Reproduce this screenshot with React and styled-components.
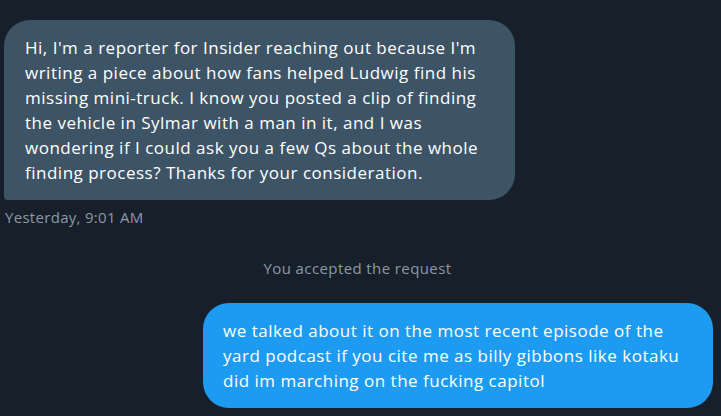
import React from "react";
import styled, { createGlobalStyle } from "styled-components";

const Global = createGlobalStyle`
  html, body { margin: 0; padding: 0; background: #17202a; }
  body { font-family: "Open Sans", "Liberation Sans", sans-serif; }
`;

const Page = styled.div`
  width: 721px;
  height: 416px;
  background: #17202a;
  overflow: hidden;
  padding-top: 20px;
  box-sizing: border-box;
  display: flex;
  flex-direction: column;
`;

const Row = styled.div`
  display: flex;
  justify-content: ${(p) => (p.$sent ? "flex-end" : "flex-start")};
  padding: ${(p) => (p.$sent ? "0 8px 0 0" : "0 0 0 4px")};
`;

const Bubble = styled.div`
  width: ${(p) => p.$w}px;
  box-sizing: border-box;
  background: ${(p) => (p.$sent ? "#1d9bf0" : "#3d5466")};
  color: #ffffff;
  font-size: 17px;
  line-height: 25px;
  letter-spacing: 0.5px;
  white-space: nowrap;
  padding: ${(p) => (p.$sent ? "15px 12px 15px 20px" : "15px 12px 15px 21px")};
  border-radius: ${(p) => (p.$sent ? "26px" : "26px 26px 26px 4px")};
`;

const Stamp = styled.div`
  color: #8b98a5;
  font-size: 15px;
  letter-spacing: 0.3px;
  line-height: 18px;
  padding: 8px 0 0 5px;
`;

const Notice = styled.div`
  color: #8b98a5;
  font-size: 15px;
  letter-spacing: 0.4px;
  line-height: 18px;
  text-align: center;
  padding: 33px 6px 0 0;
  margin-bottom: 26px;
`;

export default function App() {
  return (
    <>
      <Global />
      <Page>
        <Row>
          <Bubble $w={511}>
            Hi, I'm a reporter for Insider reaching out because I'm
            <br />
            writing a piece about how fans helped Ludwig find his
            <br />
            missing mini-truck. I know you posted a clip of finding
            <br />
            the vehicle in Sylmar with a man in it, and I was
            <br />
            wondering if I could ask you a few Qs about the whole
            <br />
            finding process? Thanks for your consideration.
          </Bubble>
        </Row>
        <Stamp>Yesterday, 9:01 AM</Stamp>
        <Notice>You accepted the request</Notice>
        <Row $sent>
          <Bubble $sent $w={510}>
            we talked about it on the most recent episode of the
            <br />
            yard podcast if you cite me as billy gibbons like kotaku
            <br />
            did im marching on the fucking capitol
          </Bubble>
        </Row>
      </Page>
    </>
  );
}
